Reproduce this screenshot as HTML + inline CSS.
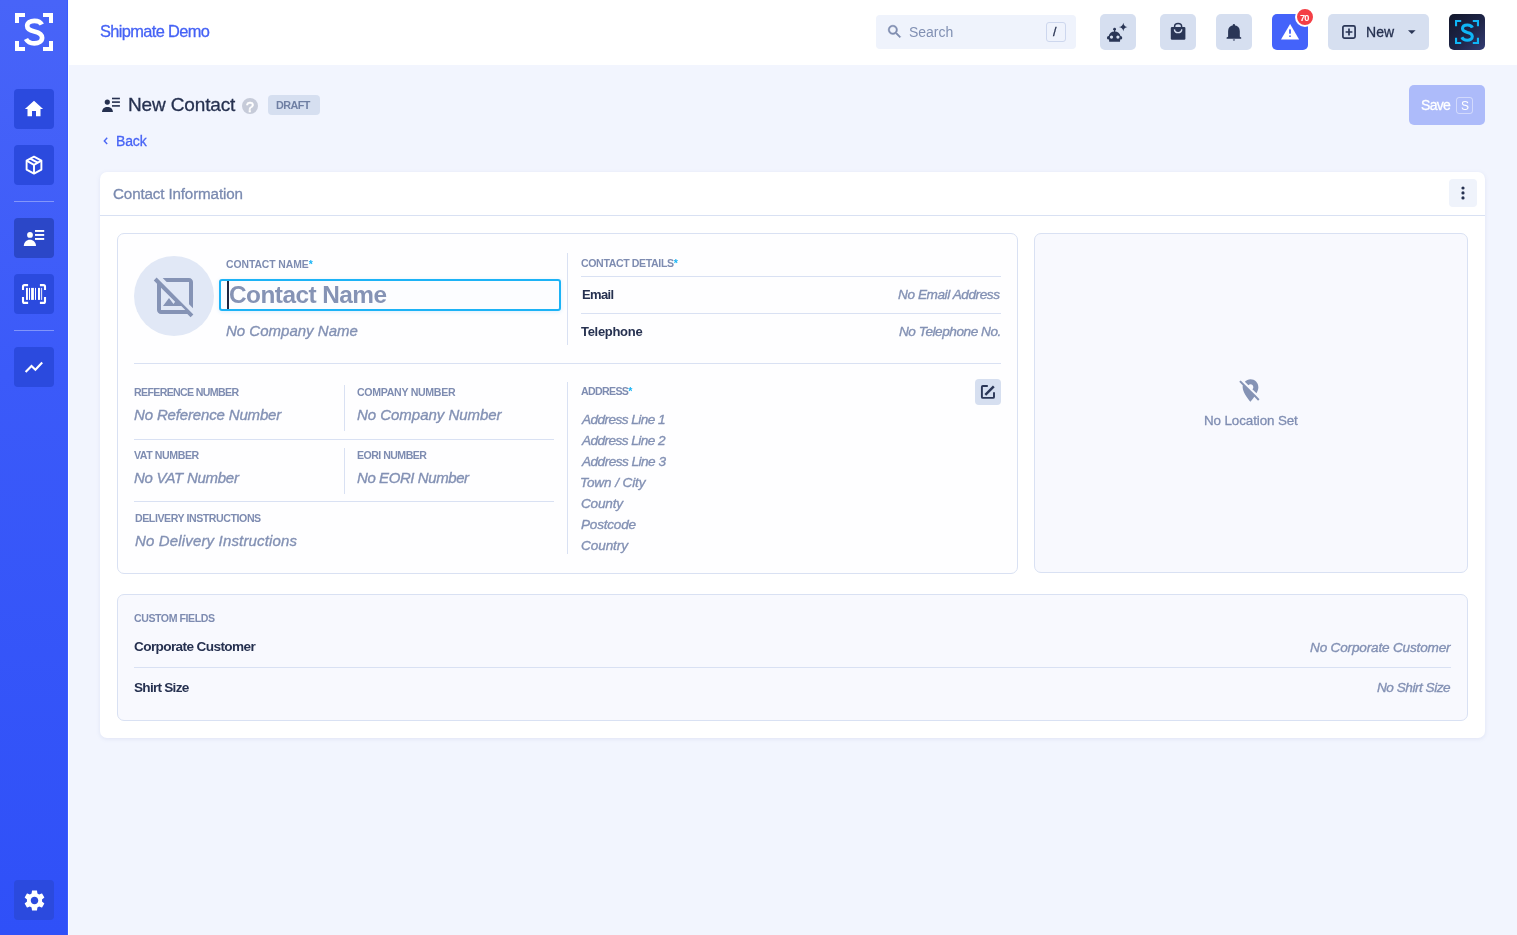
<!DOCTYPE html>
<html><head><meta charset="utf-8"><style>
html,body{margin:0;padding:0;width:1517px;height:935px;overflow:hidden;background:#f2f5fe;font-family:"Liberation Sans", sans-serif;}
.t{position:absolute;white-space:nowrap;will-change:transform;}
.b{position:absolute;box-sizing:border-box;}
svg{position:absolute;overflow:visible;}
</style></head><body>
<div class="b" style="left:68px;top:0px;width:1449px;height:65px;background:#ffffff;"></div>
<div class="b" style="left:0px;top:0px;width:68px;height:935px;background:linear-gradient(180deg,#4864f8 0%,#3b5af9 40%,#2f50f8 100%);"></div>
<div class="b" style="left:67px;top:0px;width:1px;height:935px;background:#3a5bff;"></div>
<div class="b" style="left:68px;top:0px;width:1px;height:935px;background:#fcfdff;"></div>
<svg style="left:0px;top:0px" width="68" height="65" viewBox="0 0 68 65"><g fill="#ffffff">
<path d="M15 13h10v4h-6v6h-4z"/><path d="M53 13h-10v4h6v6h4z"/>
<path d="M15 51h10v-4h-6v-6h-4z"/><path d="M53 51h-10v-4h6v-6h4z"/></g>
<path d="M41.8 24.6C40.5 21.9 37.7 20.8 34.4 20.8C30.2 20.8 27.2 22.8 27.2 26C27.2 29.6 30.6 30.6 34.4 31.5C38.8 32.5 42.1 33.8 42.1 37.8C42.1 41.3 38.7 43.4 34.3 43.4C30.4 43.4 27.5 41.8 26 39" fill="none" stroke="#ffffff" stroke-width="4.7"/></svg>
<div class="b" style="left:14px;top:89px;width:40px;height:40px;background:#2b4ade;border-radius:4px;"></div>
<div class="b" style="left:14px;top:145px;width:40px;height:40px;background:#2b4ade;border-radius:4px;"></div>
<div class="b" style="left:14px;top:274px;width:40px;height:40px;background:#2b4ade;border-radius:4px;"></div>
<div class="b" style="left:14px;top:347px;width:40px;height:40px;background:#2b4ade;border-radius:4px;"></div>
<div class="b" style="left:14px;top:880px;width:40px;height:40px;background:#2b4ade;border-radius:4px;"></div>
<div class="b" style="left:14px;top:218px;width:40px;height:40px;background:#2b47c8;border-radius:4px;"></div>
<div class="b" style="left:14px;top:201px;width:40px;height:1px;background:rgba(255,255,255,0.35);"></div>
<div class="b" style="left:14px;top:330px;width:40px;height:1px;background:rgba(255,255,255,0.35);"></div>
<svg style="left:14px;top:89px" width="40" height="40" viewBox="0 0 40 40"><path d="M20 11.8L29.1 19.9H26.5V27.2H22V22H18V27.2H13.5V19.9H10.9Z" fill="#fff"/></svg>
<svg style="left:14px;top:145px" width="40" height="40" viewBox="0 0 40 40"><g fill="none" stroke="#fff" stroke-width="1.9" stroke-linejoin="round">
<path d="M20 11.6L27.4 15.6V24.6L20 28.6L12.6 24.6V15.6Z"/><path d="M12.6 15.6L20 19.8L27.4 15.6M20 19.8V28.6"/>
<path d="M16.2 13.6L23.6 17.7"/></g></svg>
<svg style="left:14px;top:218px" width="40" height="40" viewBox="0 0 40 40"><g fill="#fff"><circle cx="16" cy="16.9" r="2.9"/>
<path d="M9.8 28C9.8 24.4 12.5 21.8 15.9 21.8C19.3 21.8 22 24.4 22 28Z"/>
<rect x="21" y="12" width="9.2" height="1.9"/><rect x="21" y="16" width="9.2" height="1.9"/><rect x="21" y="20" width="9.2" height="1.9"/></g></svg>
<svg style="left:14px;top:274px" width="40" height="40" viewBox="0 0 40 40"><g fill="none" stroke="#fff" stroke-width="2.1">
<path d="M9 16V12.6Q9 11.1 10.5 11.1H14.1"/><path d="M31 16V12.6Q31 11.1 29.5 11.1H25.9"/>
<path d="M9 23V27.4Q9 28.9 10.5 28.9H14.1"/><path d="M31 23V27.4Q31 28.9 29.5 28.9H25.9"/></g>
<g fill="#fff"><rect x="12" y="13.9" width="1.9" height="12"/><rect x="15" y="13.9" width="1" height="12"/>
<rect x="17.1" y="13.9" width="2.8" height="12"/><rect x="21" y="13.9" width="1" height="12"/>
<rect x="24" y="13.9" width="2.1" height="12"/><rect x="27.2" y="13.9" width="0.9" height="12"/></g></svg>
<svg style="left:14px;top:347px" width="40" height="40" viewBox="0 0 40 40"><path d="M11.6 25L17.5 19L21.4 22.8L28.2 15.5" fill="none" stroke="#fff" stroke-width="2.1"/></svg>
<svg style="left:23.5px;top:889.5px" width="21" height="21" viewBox="2 2 20 20"><path fill="#fff" d="M19.14 12.94c.04-.3.06-.61.06-.94 0-.32-.02-.64-.07-.94l2.03-1.58c.18-.14.23-.41.12-.61l-1.92-3.32c-.12-.22-.37-.29-.59-.22l-2.39.96c-.5-.38-1.03-.7-1.62-.94l-.36-2.54c-.04-.24-.24-.41-.48-.41h-3.84c-.24 0-.43.17-.47.41l-.36 2.54c-.59.24-1.13.57-1.62.94l-2.39-.96c-.22-.08-.47 0-.59.22L2.74 8.870c-.12.21-.08.47.12.61l2.03 1.58c-.05.3-.09.63-.09.94s.02.64.07.94l-2.03 1.58c-.18.14-.23.41-.12.61l1.92 3.320c.12.22.37.29.59.22l2.39-.96c.5.38 1.03.7 1.62.94l.36 2.54c.05.24.24.41.48.41h3.84c.24 0 .44-.17.47-.41l.36-2.54c.59-.24 1.13-.56 1.62-.94l2.39.96c.22.08.47 0 .59-.22l1.92-3.32c.12-.22.07-.47-.12-.61l-2.01-1.58zM12 15.6c-1.98 0-3.6-1.62-3.6-3.6s1.62-3.6 3.6-3.6 3.6 1.62 3.6 3.6-1.62 3.6-3.6 3.6z"/></svg>
<div class="t" style="left:100.30px;top:10.914px;font-size:16.40px;line-height:40px;color:#4562f5;letter-spacing:-0.642px;-webkit-text-stroke:0.3px currentColor;">Shipmate Demo</div>
<div class="b" style="left:876px;top:15px;width:200px;height:34px;background:#eff3fc;border-radius:4px;"></div>
<svg style="left:885.8px;top:23.2px" width="17.3" height="17.3" viewBox="0 0 24 24"><path fill="#7f8db0" stroke="#7f8db0" stroke-width="0.6" d="M15.5 14h-.79l-.28-.27C15.41 12.59 16 11.11 16 9.5 16 5.91 13.09 3 9.5 3S3 5.91 3 9.5 5.91 16 9.5 16c1.61 0 3.09-.59 4.23-1.57l.27.28v.79l5 4.99L20.49 19l-4.99-5zm-6 0C7.01 14 5 11.99 5 9.5S7.01 5 9.5 5 14 7.01 14 9.5 11.99 14 9.5 14z"/></svg>
<div class="t" style="left:908.80px;top:12.008px;font-size:14.00px;line-height:40px;color:#8190b3;letter-spacing:-0.014px;">Search</div>
<div class="b" style="left:1046px;top:22px;width:20px;height:20px;background:transparent;border-radius:3px;border:1px solid #cdd7ee;"></div>
<div class="t" style="left:1053.20px;top:12.012px;font-size:12.50px;line-height:40px;color:#263150;-webkit-text-stroke:0.3px currentColor;">/</div>
<div class="b" style="left:1100px;top:14px;width:36px;height:36px;background:#d6dff0;border-radius:5px;"></div>
<div class="b" style="left:1160px;top:14px;width:36px;height:36px;background:#d6dff0;border-radius:5px;"></div>
<div class="b" style="left:1216px;top:14px;width:36px;height:36px;background:#d6dff0;border-radius:5px;"></div>
<div class="b" style="left:1272px;top:14px;width:36px;height:36px;background:#4463fa;border-radius:5px;"></div>
<svg style="left:1100px;top:14px" width="36" height="36" viewBox="0 0 36 36"><g fill="#2a3656">
<circle cx="14.6" cy="15.2" r="1.4"/><rect x="14" y="15" width="1.2" height="3"/>
<path d="M9.2 27.7L9 25.6Q6.9 25.4 6.9 23.9Q6.9 22.3 8.7 22.1Q9.6 17.4 14.6 17.4Q19.6 17.4 20.5 22.1Q22.3 22.3 22.3 23.9Q22.3 25.4 20.2 25.6L20 27.7Z"/>
<path d="M23.3 8.7Q23.9 12.5 27.5 13.1Q23.9 13.7 23.3 17.3Q22.7 13.7 18.8 13.1Q22.7 12.5 23.3 8.7Z"/></g>
<circle cx="11.5" cy="23.1" r="1.6" fill="#d6dff0"/><circle cx="17.9" cy="23.1" r="1.6" fill="#d6dff0"/></svg>
<svg style="left:1160px;top:14px" width="36" height="36" viewBox="0 0 36 36"><path d="M14.6 13.5V12.6Q14.6 9.6 18.1 9.6Q21.6 9.6 21.6 12.6V13.5" fill="none" stroke="#2a3656" stroke-width="1.5"/>
<rect x="10.8" y="12.9" width="14.6" height="12.9" rx="1.2" fill="#2a3656"/>
<path d="M14.4 15.3Q14.8 18.6 18.1 18.6Q21.4 18.6 21.8 15.3" fill="none" stroke="#d6dff0" stroke-width="1.4"/></svg>
<svg style="left:1216px;top:14px" width="36" height="36" viewBox="0 0 36 36"><g fill="#2a3656"><circle cx="17.9" cy="11.2" r="1.2"/>
<path d="M12.1 22.7V17.3Q12.1 11.6 17.9 11.6Q23.8 11.6 23.8 17.3V22.7L25.2 23.5V24.7H10.6V23.5Z"/>
<path d="M16.8 25.4H19.1Q19 26.6 17.95 26.6Q16.9 26.6 16.8 25.4Z"/></g></svg>
<svg style="left:1272px;top:14px" width="36" height="36" viewBox="0 0 36 36"><path d="M18.1 10L27.1 25.6H9Z" fill="#fff"/><rect x="17.1" y="15.4" width="1.8" height="4.3" fill="#4463fa"/><rect x="17.1" y="21.5" width="1.8" height="1.4" fill="#4463fa"/></svg>
<div class="b" style="left:1294.7px;top:7px;width:20px;height:20px;border-radius:50%;background:#f43f46;border:2px solid #fff;"></div>
<div class="t" style="left:1299.80px;top:-2.000px;font-size:9.20px;line-height:40px;color:#fff;font-weight:bold;letter-spacing:-0.910px;">70</div>
<div class="b" style="left:1328px;top:14px;width:101px;height:36px;background:#d6dff0;border-radius:5px;"></div>
<svg style="left:1342px;top:25px" width="14" height="14" viewBox="0 0 14 14"><rect x="0.9" y="0.9" width="12.2" height="12.2" rx="1.6" fill="none" stroke="#2a3656" stroke-width="1.7"/><path d="M7 3.6V10.4M3.6 7H10.4" stroke="#2a3656" stroke-width="1.7"/></svg>
<div class="t" style="left:1365.50px;top:11.811px;font-size:14.00px;line-height:40px;color:#263150;letter-spacing:0.052px;-webkit-text-stroke:0.3px currentColor;">New</div>
<svg style="left:1408px;top:30px" width="8" height="5" viewBox="0 0 8 5"><path d="M0 0.3H7.6L3.8 4Z" fill="#2a3656"/></svg>
<div class="b" style="left:1449px;top:14px;width:36px;height:36px;background:linear-gradient(135deg,#11162a 0%,#1f2548 55%,#333c74 100%);border-radius:5px;"></div>
<svg style="left:1449px;top:14px" width="36" height="36" viewBox="0 0 36 36"><g fill="#0fb6f7">
<path d="M6 6h6.2v2.1h-4.1v4.1H6z"/><path d="M30 6h-6.2v2.1h4.1v4.1H30z"/>
<path d="M6 30h6.2v-2.1h-4.1v-4.1H6z"/><path d="M30 30h-6.2v-2.1h4.1v-4.1H30z"/></g>
<path d="M23.4 13.6C22.6 11.7 20.7 11 18.4 11C15.6 11 13.5 12.3 13.5 14.6C13.5 17.1 15.9 17.8 18.4 18.4C21.3 19 23.3 19.9 23.3 22.5C23.3 24.8 21.1 26.2 18.2 26.2C15.7 26.2 13.8 25.1 12.8 23.2" fill="none" stroke="#0fb6f7" stroke-width="3.1"/></svg>
<svg style="left:98px;top:92px" width="26" height="26" viewBox="0 0 26 26"><g fill="#263150"><circle cx="9.3" cy="10.1" r="2.6"/>
<path d="M4 19.9C4 16.8 6.4 14.9 9.45 14.9C12.5 14.9 14.9 16.8 14.9 19.9Z"/>
<rect x="14" y="5.7" width="7.9" height="1.6"/><rect x="14" y="9.3" width="7.9" height="1.6"/><rect x="14" y="13.1" width="7.9" height="1.6"/></g></svg>
<div class="t" style="left:127.70px;top:85.313px;font-size:19.00px;line-height:40px;color:#263150;letter-spacing:-0.139px;-webkit-text-stroke:0.3px currentColor;">New Contact</div>
<div class="b" style="left:242px;top:98px;width:16px;height:16px;border-radius:50%;background:#c6cbd9;"></div>
<div class="t" style="left:245.90px;top:86.911px;font-size:14.20px;line-height:40px;color:#fff;-webkit-text-stroke:0.6px #fff;">?</div>
<div class="b" style="left:268px;top:95px;width:52px;height:20px;background:#d6dff0;border-radius:4px;"></div>
<div class="t" style="left:276.00px;top:85.311px;font-size:10.80px;line-height:40px;color:#6f7fa3;font-weight:bold;letter-spacing:-0.547px;">DRAFT</div>
<svg style="left:102px;top:136px" width="8" height="10" viewBox="0 0 8 10"><path d="M5.2 1.8L2.3 4.9L5.2 8" fill="none" stroke="#4a66f5" stroke-width="1.4"/></svg>
<div class="t" style="left:116.00px;top:121.008px;font-size:14.00px;line-height:40px;color:#4864f5;letter-spacing:-0.141px;-webkit-text-stroke:0.3px currentColor;">Back</div>
<div class="b" style="left:1409px;top:85px;width:76px;height:40px;background:#adbbfa;border-radius:5px;"></div>
<div class="t" style="left:1421.00px;top:85.205px;font-size:14.00px;line-height:40px;color:#ffffff;letter-spacing:-0.708px;-webkit-text-stroke:0.3px currentColor;">Save</div>
<div class="b" style="left:1456px;top:97px;width:17px;height:17px;background:transparent;border-radius:3px;border:1px solid rgba(255,255,255,0.45);"></div>
<div class="t" style="left:1460.50px;top:86.014px;font-size:12.00px;line-height:40px;color:#ffffff;">S</div>
<div class="b" style="left:100px;top:172px;width:1385px;height:566px;background:#ffffff;border-radius:7px;box-shadow:0 1px 4px rgba(110,130,190,0.14);"></div>
<div class="t" style="left:112.80px;top:174.014px;font-size:15.20px;line-height:40px;color:#7a8ab0;letter-spacing:-0.144px;-webkit-text-stroke:0.3px currentColor;">Contact Information</div>
<div class="b" style="left:100px;top:215px;width:1385px;height:1px;background:#d9e1f3;"></div>
<div class="b" style="left:1449px;top:179px;width:28px;height:28px;background:#eff3fb;border-radius:4px;"></div>
<svg style="left:1449px;top:179px" width="28" height="28" viewBox="0 0 28 28"><g fill="#263150"><circle cx="14" cy="9" r="1.6"/><circle cx="14" cy="13.9" r="1.6"/><circle cx="14" cy="18.9" r="1.6"/></g></svg>
<div class="b" style="left:117px;top:233px;width:901px;height:341px;background:#fefeff;border-radius:7px;border:1px solid #d9e1f3;"></div>
<div class="b" style="left:134px;top:256px;width:80px;height:80px;border-radius:50%;background:#e1e8f6;"></div>
<svg style="left:151.3px;top:272.2px" width="48" height="48" viewBox="0 0 24 24"><path fill="#8593b5" d="M19 5v11.17l2 2V5c0-1.1-.9-2-2-2H5.83l2 2H19zM2.81 2.81L1.39 4.22 3 5.830V19c0 1.1.9 2 2 2h13.17l1.61 1.61 1.41-1.41L2.81 2.81zM5 19V7.83l7.07 7.07L11.25 16 9 13l-3 4h9.17l2 2H5z"/></svg>
<div class="t" style="left:226.20px;top:245.006px;font-size:10.40px;line-height:40px;color:#7e8cb1;font-weight:bold;letter-spacing:-0.070px;">CONTACT NAME<span style="color:#18b4f5">*</span></div>
<div class="b" style="left:219px;top:279px;width:342px;height:32px;background:#fcfdff;border-radius:3px;border:2px solid #1cb3f6;box-shadow:0 1px 4px rgba(30,150,240,0.15);"></div>
<div class="b" style="left:227px;top:281px;width:1.6px;height:28px;background:#1e2741;"></div>
<div class="t" style="left:228.80px;top:275.408px;font-size:24.40px;line-height:40px;color:#8593b5;font-weight:bold;letter-spacing:-0.539px;">Contact Name</div>
<div class="t" style="left:226.40px;top:311.006px;font-size:15.00px;line-height:40px;color:#8391b4;font-style:italic;letter-spacing:0.009px;-webkit-text-stroke:0.35px currentColor;">No Company Name</div>
<div class="b" style="left:567px;top:253px;width:1px;height:92px;background:#d9e1f3;"></div>
<div class="t" style="left:581.20px;top:242.802px;font-size:10.60px;line-height:40px;color:#7e8cb1;font-weight:bold;letter-spacing:-0.386px;">CONTACT DETAILS<span style="color:#18b4f5">*</span></div>
<div class="b" style="left:581px;top:276px;width:420px;height:1px;background:#d9e1f3;"></div>
<div class="b" style="left:581px;top:313px;width:420px;height:1px;background:#d9e1f3;"></div>
<div class="t" style="left:581.70px;top:275.011px;font-size:13.00px;line-height:40px;color:#263150;font-weight:bold;letter-spacing:-0.643px;">Email</div>
<div class="t" style="left:581.00px;top:312.208px;font-size:13.00px;line-height:40px;color:#263150;font-weight:bold;letter-spacing:-0.301px;">Telephone</div>
<div class="t" style="left:898.00px;top:275.203px;font-size:13.60px;line-height:40px;color:#8391b4;font-style:italic;letter-spacing:-0.420px;-webkit-text-stroke:0.35px currentColor;">No Email Address</div>
<div class="t" style="left:898.90px;top:311.900px;font-size:13.60px;line-height:40px;color:#8391b4;font-style:italic;letter-spacing:-0.447px;-webkit-text-stroke:0.35px currentColor;">No Telephone No.</div>
<div class="b" style="left:134px;top:363px;width:867px;height:1px;background:#d9e1f3;"></div>
<div class="t" style="left:134.30px;top:371.908px;font-size:10.60px;line-height:40px;color:#7e8cb1;font-weight:bold;letter-spacing:-0.648px;">REFERENCE NUMBER</div>
<div class="t" style="left:134.30px;top:395.202px;font-size:15.00px;line-height:40px;color:#8391b4;font-style:italic;letter-spacing:-0.154px;-webkit-text-stroke:0.35px currentColor;">No Reference Number</div>
<div class="t" style="left:357.20px;top:371.908px;font-size:10.60px;line-height:40px;color:#7e8cb1;font-weight:bold;letter-spacing:-0.311px;">COMPANY NUMBER</div>
<div class="t" style="left:357.20px;top:395.202px;font-size:15.00px;line-height:40px;color:#8391b4;font-style:italic;letter-spacing:-0.029px;-webkit-text-stroke:0.35px currentColor;">No Company Number</div>
<div class="t" style="left:134.20px;top:435.211px;font-size:10.60px;line-height:40px;color:#7e8cb1;font-weight:bold;letter-spacing:-0.422px;">VAT NUMBER</div>
<div class="t" style="left:134.20px;top:458.006px;font-size:15.00px;line-height:40px;color:#8391b4;font-style:italic;letter-spacing:-0.266px;-webkit-text-stroke:0.35px currentColor;">No VAT Number</div>
<div class="t" style="left:357.20px;top:435.211px;font-size:10.60px;line-height:40px;color:#7e8cb1;font-weight:bold;letter-spacing:-0.539px;">EORI NUMBER</div>
<div class="t" style="left:357.20px;top:458.006px;font-size:15.00px;line-height:40px;color:#8391b4;font-style:italic;letter-spacing:-0.418px;-webkit-text-stroke:0.35px currentColor;">No EORI Number</div>
<div class="t" style="left:134.50px;top:497.908px;font-size:10.60px;line-height:40px;color:#7e8cb1;font-weight:bold;letter-spacing:-0.431px;">DELIVERY INSTRUCTIONS</div>
<div class="t" style="left:134.50px;top:520.809px;font-size:15.00px;line-height:40px;color:#8391b4;font-style:italic;letter-spacing:0.157px;-webkit-text-stroke:0.35px currentColor;">No Delivery Instructions</div>
<div class="b" style="left:344px;top:385px;width:1px;height:46px;background:#d9e1f3;"></div>
<div class="b" style="left:344px;top:448px;width:1px;height:46px;background:#d9e1f3;"></div>
<div class="b" style="left:134px;top:439px;width:420px;height:1px;background:#d9e1f3;"></div>
<div class="b" style="left:134px;top:501px;width:420px;height:1px;background:#d9e1f3;"></div>
<div class="b" style="left:567px;top:382px;width:1px;height:172px;background:#d9e1f3;"></div>
<div class="t" style="left:581.30px;top:371.015px;font-size:10.60px;line-height:40px;color:#7e8cb1;font-weight:bold;letter-spacing:-0.656px;">ADDRESS<span style="color:#18b4f5">*</span></div>
<div class="b" style="left:975px;top:379px;width:26px;height:26px;background:#d6dff0;border-radius:4px;"></div>
<svg style="left:975px;top:379px" width="26" height="26" viewBox="0 0 26 26"><path d="M12.8 7H7.9Q6.9 7 6.9 8V17.9Q6.9 18.9 7.9 18.9H18Q19 18.9 19 17.9V13.2" fill="none" stroke="#2a3656" stroke-width="1.9"/>
<path d="M10.3 15.8L18.8 7.3" stroke="#2a3656" stroke-width="2.5"/></svg>
<div class="t" style="left:582.30px;top:399.900px;font-size:13.60px;line-height:40px;color:#8391b4;font-style:italic;letter-spacing:-0.548px;-webkit-text-stroke:0.35px currentColor;">Address Line 1</div>
<div class="t" style="left:582.30px;top:420.900px;font-size:13.60px;line-height:40px;color:#8391b4;font-style:italic;letter-spacing:-0.548px;-webkit-text-stroke:0.35px currentColor;">Address Line 2</div>
<div class="t" style="left:582.30px;top:441.900px;font-size:13.60px;line-height:40px;color:#8391b4;font-style:italic;letter-spacing:-0.517px;-webkit-text-stroke:0.35px currentColor;">Address Line 3</div>
<div class="t" style="left:580.30px;top:462.900px;font-size:13.60px;line-height:40px;color:#8391b4;font-style:italic;letter-spacing:-0.124px;-webkit-text-stroke:0.35px currentColor;">Town / City</div>
<div class="t" style="left:581.30px;top:483.900px;font-size:13.60px;line-height:40px;color:#8391b4;font-style:italic;letter-spacing:-0.195px;-webkit-text-stroke:0.35px currentColor;">County</div>
<div class="t" style="left:581.30px;top:504.900px;font-size:13.60px;line-height:40px;color:#8391b4;font-style:italic;letter-spacing:-0.231px;-webkit-text-stroke:0.35px currentColor;">Postcode</div>
<div class="t" style="left:581.30px;top:525.900px;font-size:13.60px;line-height:40px;color:#8391b4;font-style:italic;letter-spacing:-0.100px;-webkit-text-stroke:0.35px currentColor;">Country</div>
<div class="b" style="left:1034px;top:233px;width:434px;height:340px;background:#f8f9fe;border-radius:7px;border:1px solid #d9e1f3;"></div>
<svg style="left:1237.4px;top:376.8px" width="27" height="27" viewBox="0 0 24 24"><path fill="#8593b5" d="M12 6.5c1.38 0 2.5 1.12 2.5 2.5 0 .74-.33 1.39-.83 1.85l3.63 3.63c.98-1.86 1.7-3.8 1.7-5.48 0-3.87-3.13-7-7-7-1.98 0-3.76.83-5.04 2.15l3.19 3.19c.46-.52 1.11-.84 1.850-.84zm4.37 9.6l-4.63-4.63-.11-.11L3.27 3 2 4.27l3.18 3.18C5.07 7.95 5 8.47 5 9c0 5.25 7 13 7 13s1.67-1.850 3.38-4.35L18.73 21 20 19.73l-3.63-3.63z"/></svg>
<div class="t" style="left:1203.90px;top:401.210px;font-size:13.40px;line-height:40px;color:#7f8db2;letter-spacing:-0.105px;-webkit-text-stroke:0.3px currentColor;">No Location Set</div>
<div class="b" style="left:117px;top:594px;width:1351px;height:127px;background:#f8f9fe;border-radius:7px;border:1px solid #d9e1f3;"></div>
<div class="t" style="left:134.40px;top:597.802px;font-size:10.60px;line-height:40px;color:#7e8cb1;font-weight:bold;letter-spacing:-0.446px;">CUSTOM FIELDS</div>
<div class="t" style="left:134.40px;top:627.203px;font-size:13.60px;line-height:40px;color:#263150;font-weight:bold;letter-spacing:-0.617px;">Corporate Customer</div>
<div class="t" style="left:1309.50px;top:627.506px;font-size:13.60px;line-height:40px;color:#8391b4;font-style:italic;letter-spacing:-0.184px;-webkit-text-stroke:0.35px currentColor;">No Corporate Customer</div>
<div class="b" style="left:134px;top:667px;width:1317px;height:1px;background:#d9e1f3;"></div>
<div class="t" style="left:134.00px;top:668.006px;font-size:13.60px;line-height:40px;color:#263150;font-weight:bold;letter-spacing:-0.742px;">Shirt Size</div>
<div class="t" style="left:1376.60px;top:668.309px;font-size:13.60px;line-height:40px;color:#8391b4;font-style:italic;letter-spacing:-0.480px;-webkit-text-stroke:0.35px currentColor;">No Shirt Size</div>
</body></html>
